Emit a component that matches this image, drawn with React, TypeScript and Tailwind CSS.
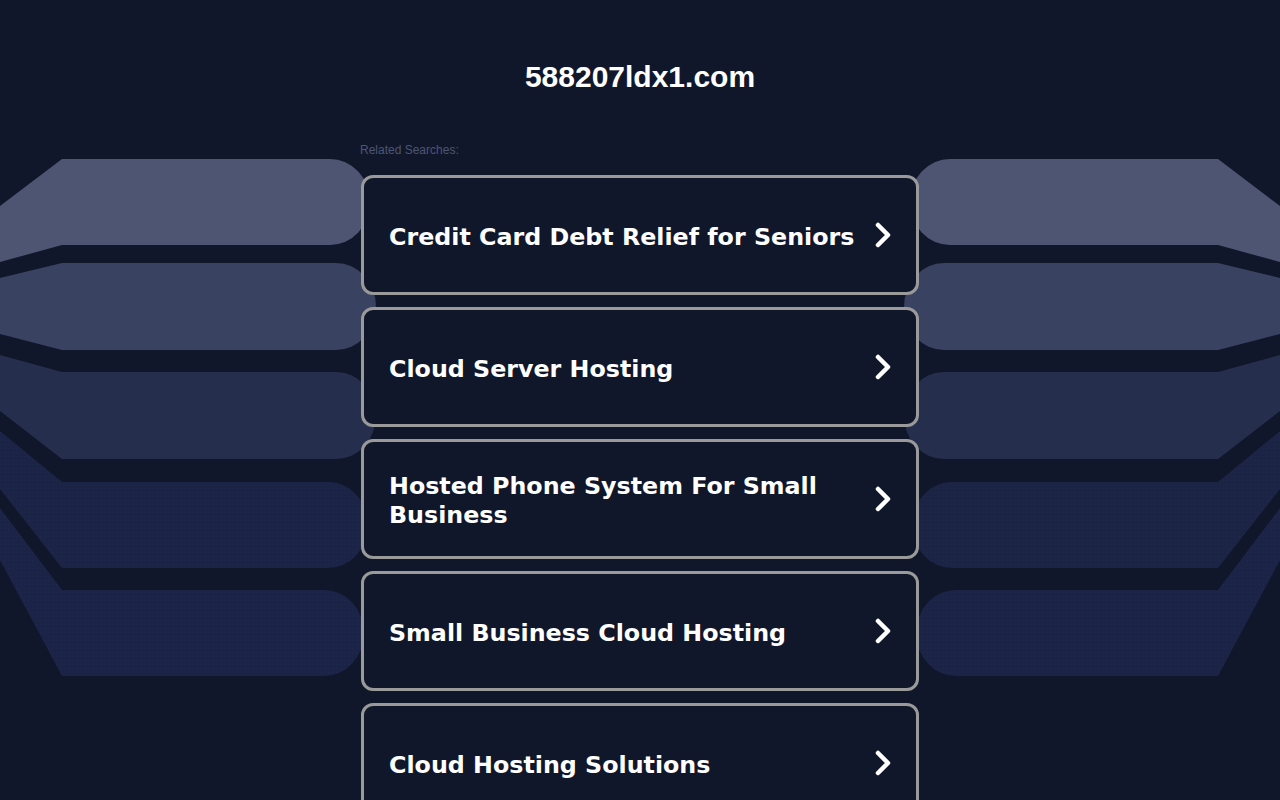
import React from "react";

const searches = [
  "Credit Card Debt Relief for Seniors",
  "Cloud Server Hosting",
  "Hosted Phone System For Small Business",
  "Small Business Cloud Hosting",
  "Cloud Hosting Solutions",
];

// left side bands, right side is mirrored
const bands = [
  { d: "M0,206 L62,159 L330,159 A40,43 0 0 1 330,245 L62,245 L0,262 Z", fill: "#4d5572" },
  { d: "M0,278 L62,263 L336,263 A40,43.5 0 0 1 336,350 L62,350 L0,334 Z", fill: "#3a4261" },
  { d: "M0,355 L62,372 L336,372 A40,43.5 0 0 1 336,459 L62,459 L0,411 Z", fill: "#262e4d" },
  { d: "M0,431 L62,482 L328,482 A40,43 0 0 1 328,568 L62,568 L0,489 Z", fill: "#1c2445" },
  { d: "M0,508 L62,590 L324,590 A40,43 0 0 1 324,676 L62,676 L0,560 Z", fill: "#1b2446" },
];

function Backdrop() {
  return (
    <svg
      className="absolute left-0 top-0 pointer-events-none"
      width="1280"
      height="800"
      viewBox="0 0 1280 800"
    >
      <defs>
        <pattern id="dots" width="4" height="4" patternUnits="userSpaceOnUse">
          <rect width="1" height="1" fill="#2a3462" />
        </pattern>
      </defs>
      {bands.map((b, i) => (
        <g key={i}>
          <path d={b.d} fill={b.fill} />
          <path d={b.d} fill={b.fill} transform="translate(1280,0) scale(-1,1)" />
          {i > 2 && (
            <>
              <path d={b.d} fill="url(#dots)" opacity="0.3" />
              <path
                d={b.d}
                fill="url(#dots)"
                opacity="0.3"
                transform="translate(1280,0) scale(-1,1)"
              />
            </>
          )}
        </g>
      ))}
    </svg>
  );
}

function Chevron() {
  return (
    <svg width="16" height="26" viewBox="0 0 16 26" className="shrink-0">
      <path
        d="M3 3 L13 13 L3 23"
        fill="none"
        stroke="#ffffff"
        strokeWidth="4.5"
        strokeLinecap="round"
        strokeLinejoin="round"
      />
    </svg>
  );
}

export default function App() {
  return (
    <div className="relative w-full h-[800px] overflow-hidden bg-[#11172b]">
      <Backdrop />
      <div className="relative mx-auto w-[558px] pt-[59px]">
        <h1
          className="text-center text-[30px] leading-[36px] font-bold text-white"
          style={{ fontFamily: '"Liberation Sans", Arial, sans-serif' }}
        >
          588207ldx1.com
        </h1>
        <p
          className="mt-[47px] -ml-px text-[12px] leading-[16px] text-[#4c5675]"
          style={{ fontFamily: '"Liberation Sans", Arial, sans-serif' }}
        >
          Related Searches:
        </p>
        <div className="mt-[17px] flex flex-col gap-[12px]">
          {searches.map((s) => (
            <a
              key={s}
              href="#"
              className="flex h-[120px] items-center justify-between gap-2 rounded-[12px] border-[3px] border-[#9a9a9a] bg-[#11172b] pl-[25px] pr-[25px]"
            >
              <span
                className="pt-[4px] text-[23.75px] leading-[29px] font-bold text-white"
                style={{ fontFamily: '"DejaVu Sans", Verdana, sans-serif' }}
              >
                {s}
              </span>
              <Chevron />
            </a>
          ))}
        </div>
      </div>
    </div>
  );
}
